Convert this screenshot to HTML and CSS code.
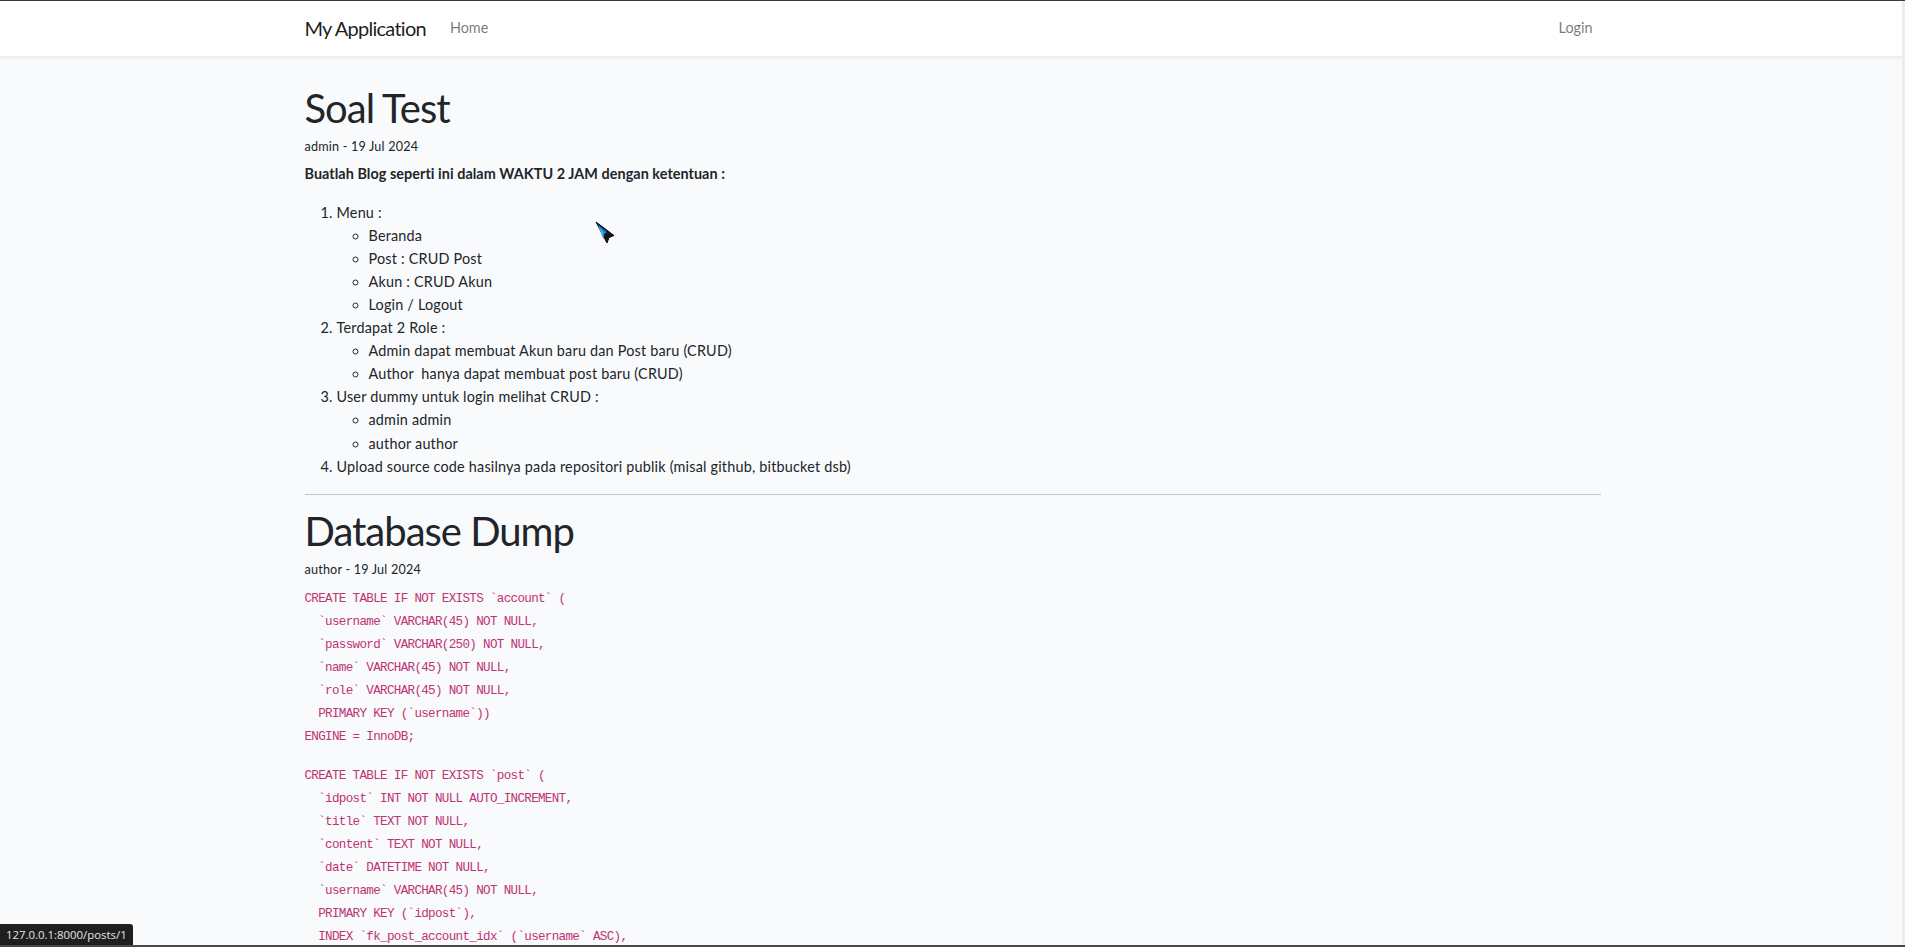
FILE: index.html
```html
<!DOCTYPE html>
<html lang="id">
<head>
<meta charset="utf-8">
<title>My Application</title>
<link rel="stylesheet" href="styles.css">
</head>
<body>
<nav class="navbar">
  <div class="container nav-inner">
    <a class="brand" href="#">My Application</a>
    <ul class="nav">
      <li><a class="nav-link" href="#">Home</a></li>
    </ul>
    <ul class="nav nav-right">
      <li><a class="nav-link" href="#">Login</a></li>
    </ul>
  </div>
</nav>

<main class="main">
  <div class="container">
    <article class="post">
      <h1 class="post-title">Soal Test</h1>
      <div class="meta">admin - 19 Jul 2024</div>
      <div class="content">
        <p><strong>Buatlah Blog seperti ini dalam WAKTU 2 JAM dengan ketentuan :</strong></p>
        <ol>
          <li>Menu :
            <ul>
              <li>Beranda</li>
              <li>Post : CRUD Post</li>
              <li>Akun : CRUD Akun</li>
              <li>Login / Logout</li>
            </ul>
          </li>
          <li>Terdapat 2 Role :
            <ul>
              <li>Admin dapat membuat Akun baru dan Post baru (CRUD)</li>
              <li>Author&nbsp; hanya dapat membuat post baru (CRUD)</li>
            </ul>
          </li>
          <li>User dummy untuk login melihat CRUD :
            <ul>
              <li>admin admin</li>
              <li>author author</li>
            </ul>
          </li>
          <li>Upload source code hasilnya pada repositori publik (misal github, bitbucket dsb)</li>
        </ol>
      </div>
    </article>

    <hr class="divider">

    <article class="post">
      <h1 class="post-title">Database Dump</h1>
      <div class="meta">author - 19 Jul 2024</div>
      <div class="content">
        <p><code>CREATE TABLE IF NOT EXISTS `account` (<br>&nbsp;&nbsp;`username` VARCHAR(45) NOT NULL,<br>&nbsp;&nbsp;`password` VARCHAR(250) NOT NULL,<br>&nbsp;&nbsp;`name` VARCHAR(45) NOT NULL,<br>&nbsp;&nbsp;`role` VARCHAR(45) NOT NULL,<br>&nbsp;&nbsp;PRIMARY KEY (`username`))<br>ENGINE = InnoDB;</code></p>
        <p><code>CREATE TABLE IF NOT EXISTS `post` (<br>&nbsp;&nbsp;`idpost` INT NOT NULL AUTO_INCREMENT,<br>&nbsp;&nbsp;`title` TEXT NOT NULL,<br>&nbsp;&nbsp;`content` TEXT NOT NULL,<br>&nbsp;&nbsp;`date` DATETIME NOT NULL,<br>&nbsp;&nbsp;`username` VARCHAR(45) NOT NULL,<br>&nbsp;&nbsp;PRIMARY KEY (`idpost`),<br>&nbsp;&nbsp;INDEX `fk_post_account_idx` (`username` ASC),<br>&nbsp;&nbsp;CONSTRAINT `fk_post_account`<br>&nbsp;&nbsp;&nbsp;&nbsp;FOREIGN KEY (`username`)<br>&nbsp;&nbsp;&nbsp;&nbsp;REFERENCES `account` (`username`)<br>&nbsp;&nbsp;&nbsp;&nbsp;ON DELETE NO ACTION<br>&nbsp;&nbsp;&nbsp;&nbsp;ON UPDATE NO ACTION)<br>ENGINE = InnoDB;</code></p>
      </div>
    </article>
  </div>
</main>

<div class="status-bar">127.0.0.1:8000/posts/1</div>

<svg class="cursor" width="22" height="26" viewBox="0 0 22 26" aria-hidden="true">
  <polygon points="1,1 19,14.5 14,16.5 12,22" fill="#15161c" stroke="#0b0b10" stroke-width="1" stroke-linejoin="round"/>
  <polygon points="2.5,3.5 8.5,18 9.5,13 12,11" fill="#1b7fd0"/>
  <polygon points="3.5,5.5 7.5,15 8.5,11.5" fill="#3fb6ff"/>
</svg>

<div class="frame-top"></div>
<div class="frame-bottom"></div>
<div class="frame-right"></div>
</body>
</html>
```

FILE: styles.css
```css
* { box-sizing: border-box; }

html, body {
  margin: 0;
  padding: 0;
}

body {
  background: #f8fafc;
  color: #212529;
  font-family: Lato, "Noto Sans", Arial, sans-serif;
  font-size: 14.4px;
  line-height: 1.6;
  letter-spacing: 0.2px;
  overflow: hidden;
}

.container {
  max-width: 1320px;
  margin: 0 auto;
  padding: 0 12px;
}

/* navbar */
.navbar {
  background: #fff;
  height: 56px;
  box-shadow: 0 2px 4px rgba(0, 0, 0, 0.075);
  position: relative;
  z-index: 1;
}

.nav-inner {
  display: flex;
  align-items: center;
  height: 56px;
}

.brand {
  font-size: 20px;
  letter-spacing: -0.75px;
  color: rgba(0, 0, 0, 0.9);
  text-decoration: none;
  margin-right: 16px;
  line-height: 32px;
}

.nav {
  list-style: none;
  margin: 0;
  padding: 0;
  display: flex;
}

.nav-right {
  margin-left: auto;
}

.nav-link {
  display: block;
  padding: 8px;
  letter-spacing: 0;
  color: rgba(0, 0, 0, 0.55);
  text-decoration: none;
}

/* main */
.main {
  padding: 28px 0 24px;
}

.post-title {
  font-size: 40px;
  font-weight: 400;
  line-height: 1.2;
  letter-spacing: -1px;
  margin: 0 0 5px;
}

.meta {
  font-size: 12.6px;
  line-height: 20px;
  margin-bottom: 5px;
}

.content p {
  margin: 0 0 16px;
}

.content strong {
  font-weight: 700;
  letter-spacing: 0.05px;
}

.content ol,
.content ul {
  margin: 0;
  padding-left: 32px;
}

.content ul {
  list-style: circle;
}

.content > ol {
  margin-bottom: 16px;
}

code {
  font-family: "Liberation Mono", "DejaVu Sans Mono", monospace;
  font-size: 12.6px;
  line-height: 1;
  letter-spacing: -0.69px;
  color: #bf3373;
}

.divider {
  border: 0;
  border-top: 1px solid #212529;
  opacity: 0.25;
  margin: 0 0 12px;
}

/* overlays: browser chrome in the capture */
.status-bar {
  position: fixed;
  left: 0;
  bottom: 2px;
  height: 21px;
  padding: 0 6px;
  background: #1f1f1f;
  color: #e4e4e4;
  font-family: "Open Sans", Arial, sans-serif;
  font-size: 11.4px;
  letter-spacing: 0;
  line-height: 21px;
  border-top-right-radius: 3px;
  z-index: 6;
}

.cursor {
  position: absolute;
  left: 595px;
  top: 221px;
}

.frame-top {
  position: fixed;
  top: 0;
  left: 0;
  right: 0;
  height: 1px;
  background: #3a3a3a;
  z-index: 5;
}

.frame-bottom {
  position: fixed;
  bottom: 0;
  left: 0;
  right: 0;
  height: 2px;
  background: #45484c;
  z-index: 4;
}

.frame-right {
  position: fixed;
  top: 0;
  bottom: 0;
  right: 0;
  width: 3px;
  background: #ececec;
  z-index: 3;
}
```
